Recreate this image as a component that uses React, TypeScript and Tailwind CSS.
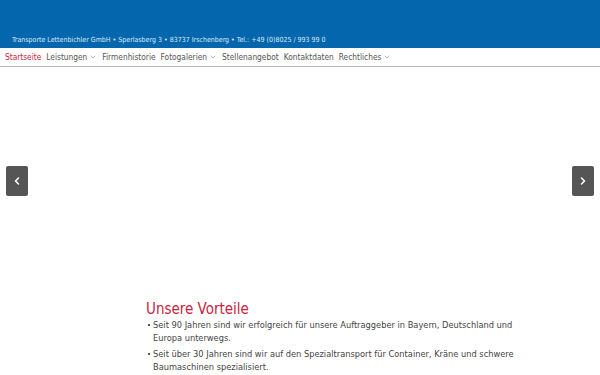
import { ChevronDown, ChevronLeft, ChevronRight } from "lucide-react";

const nav = [
  { label: "Startseite", active: true },
  { label: "Leistungen", sub: true },
  { label: "Firmenhistorie" },
  { label: "Fotogalerien", sub: true },
  { label: "Stellenangebot" },
  { label: "Kontaktdaten" },
  { label: "Rechtliches", sub: true },
];

const vorteile = [
  "Seit 90 Jahren sind wir erfolgreich für unsere Auftraggeber in Bayern, Deutschland und Europa unterwegs.",
  "Seit über 30 Jahren sind wir auf den Spezialtransport für Container, Kräne und schwere Baumaschinen spezialisiert.",
];

export default function App() {
  return (
    <div className="w-[600px] h-[375px] overflow-hidden bg-white font-['DejaVu_Sans_Condensed','DejaVu_Sans',sans-serif] font-stretch-condensed">
      {/* Kopfbereich */}
      <header className="h-[48px] bg-[#0467ad] flex items-end px-[12px] pb-[3px]">
        <p className="text-[7px] leading-[10px] text-[#dbe8f4]">
          Transporte Lettenbichler GmbH • Sperlasberg 3 • 83737 Irschenberg • Tel.: +49 (0)8025 / 993 99 0
        </p>
      </header>

      {/* Navigation */}
      <nav className="h-[19px] border-b border-[#b5b5b5] flex items-center pl-[5px] gap-[5px] text-[8.3px] text-[#555]">
        {nav.map((n) => (
          <span key={n.label} className={`flex items-center gap-[1px] ${n.active ? "text-[#c8243f]" : ""}`}>
            {n.label}
            {n.sub && <ChevronDown className="w-[8px] h-[8px] ml-[1px] text-[#777]" strokeWidth={1.5} />}
          </span>
        ))}
      </nav>

      {/* Slider */}
      <section className="h-[227px] flex items-center justify-between px-[6px]">
        <button className="w-[22px] h-[30px] rounded-[2px] bg-[#555] flex items-center justify-center">
          <ChevronLeft className="w-[12px] h-[12px] text-white" strokeWidth={3} />
        </button>
        <button className="w-[22px] h-[30px] rounded-[2px] bg-[#555] flex items-center justify-center">
          <ChevronRight className="w-[12px] h-[12px] text-white" strokeWidth={3} />
        </button>
      </section>

      {/* Inhalt */}
      <main className="pl-[146px] pr-[78px] pt-[6px]">
        <h2 className="text-[15px] leading-[18px] text-[#c8243f]">Unsere Vorteile</h2>
        <ul className="text-[9.2px] leading-[13px] text-[#444] space-y-[3px]">
          {vorteile.map((t) => (
            <li key={t} className="flex gap-[3px] pl-[2px]">
              <span className="mt-[6px] w-[2px] h-[2px] shrink-0 bg-[#555]" />
              <span>{t}</span>
            </li>
          ))}
        </ul>
      </main>
    </div>
  );
}
